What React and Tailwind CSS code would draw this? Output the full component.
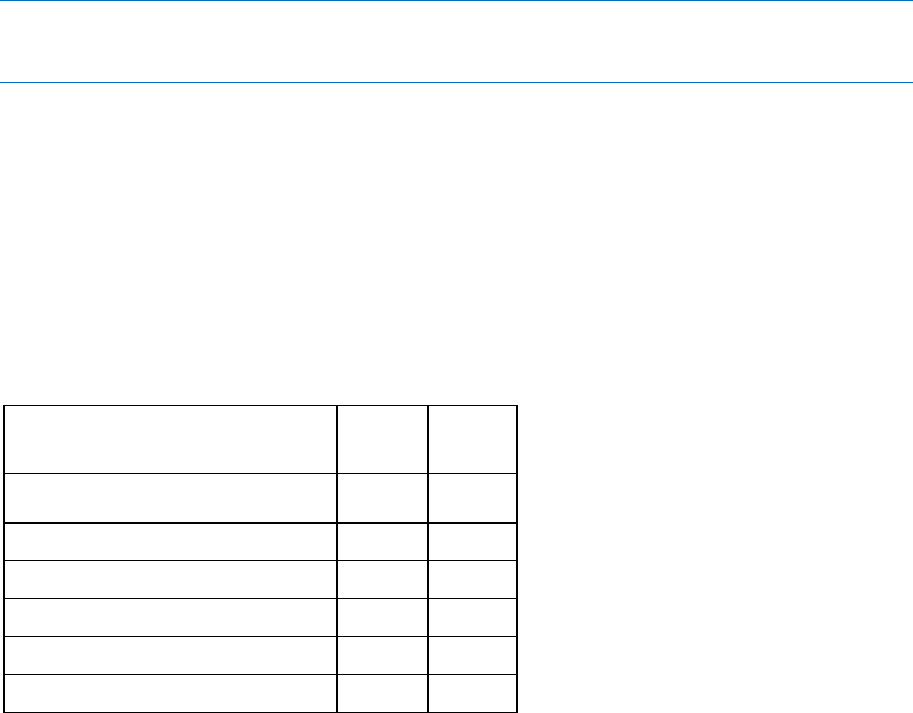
import React from 'react';

const rows = [
  { h: 'h-[68px]', b: 'border-b' },
  { h: 'h-[50px]', b: 'border-b-2' },
  { h: 'h-[37px]', b: 'border-b' },
  { h: 'h-[38px]', b: 'border-b' },
  { h: 'h-[38px]', b: 'border-b' },
  { h: 'h-[38px]', b: 'border-b' },
  { h: 'h-[38px]', b: 'border-b' },
];

const App = () => {
  return (
    <div className="min-h-[713px] bg-white" style={{ fontFamily: '"Liberation Sans", Arial, sans-serif' }}>
      {/* Header band */}
      <div className="h-[83px] border-t border-b border-[#0070c0]"></div>

      {/* Table */}
      <div className="mt-[322px] ml-[3px] w-[515px] border-l-2 border-t border-black">
        {rows.map((row, i) => (
          <div key={i} className={`flex ${row.h} ${row.b} border-black`}>
            <div className="w-[333px] border-r-2 border-black"></div>
            <div className="w-[91px] border-r-2 border-black"></div>
            <div className="w-[89px] border-r-2 border-black"></div>
          </div>
        ))}
      </div>
    </div>
  );
};

export default App;
